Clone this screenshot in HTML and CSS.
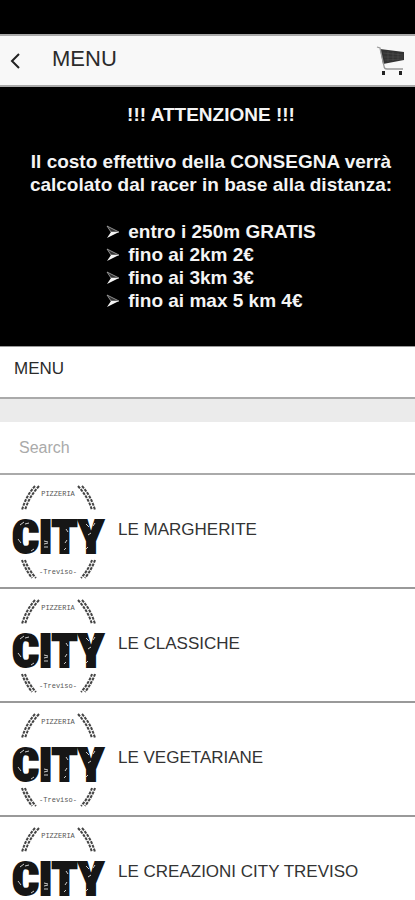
FILE: index.html
```html
<!DOCTYPE html>
<html lang="it">
<head>
    <meta charset="UTF-8">
    <meta name="viewport" content="width=device-width, initial-scale=1.0">
    <title>Menu</title>
    <link rel="stylesheet" href="styles.css">
</head>
<body>
    <!-- Shared artwork -->
    <svg class="sprite" aria-hidden="true">
        <symbol id="city-logo" viewBox="0 0 96 100">
            <g class="logo-arc">
                <path d="M23 5Q14 15 10 29M27 5Q17 16 13 29" />
                <path d="M70 5Q79 15 83 29M66 5Q76 16 80 29" />
                <path d="M10 79Q13 88 20 97M13 79Q16 88 24 97" />
                <path d="M83 79Q80 88 73 97M80 79Q77 88 69 97" />
            </g>
            <text class="logo-small" x="46" y="15">PIZZERIA</text>
            <text class="logo-name" x="46" y="72">CITY</text>
            <text class="logo-small" x="46" y="93">-Treviso-</text>
            <g class="logo-scratch">
                <path d="M8 44l4-3M13 43l4-1M6 58l3 4M19 70l3-2M32 60l4 1M32 63l4-1M32 66l4 0M54 48l2 3M53 62l2-3M52 69l2-2M74 43l3 3M76 54l3-2M83 42l-2 3M74 68l2-2" />
            </g>
        </symbol>
        <symbol id="arrow" viewBox="0 0 14 14">
            <path class="arrow-top" d="M1 1L13 7H5Z" />
            <path class="arrow-bottom" d="M1 13L13 7H5Z" />
        </symbol>
    </svg>

    <header class="topbar">
        <button type="button" class="icon-button" aria-label="Indietro">
            <svg class="back-icon" viewBox="0 0 12 18"><path d="M10 2L3 9L10 16" /></svg>
        </button>
        <h1 class="topbar-title">MENU</h1>
        <button type="button" class="icon-button" aria-label="Carrello">
            <svg class="cart-icon" viewBox="0 0 30 30">
                <path class="cart-basket" d="M4 3L28 6V14L7 18Z" />
                <path class="cart-mesh" d="M7 7L27 9M8 11L27 11M9 14L27 13M12 5V16M17 6V15M22 7V14" />
                <path class="cart-frame" d="M1 1L4 2L8 20Q8 23 11 23H27" />
                <path class="cart-wheels" d="M6 25h3v4h-3zM23 25h3v4h-3z" />
            </svg>
        </button>
    </header>

    <section class="notice">
        <h2 class="notice-title">!!! ATTENZIONE !!!</h2>
        <p>Il costo effettivo della CONSEGNA verrà<br>calcolato dal racer in base alla distanza:</p>
        <ul class="rates">
            <li><svg class="arrow"><use href="#arrow" /></svg>entro i 250m GRATIS</li>
            <li><svg class="arrow"><use href="#arrow" /></svg>fino ai 2km 2€</li>
            <li><svg class="arrow"><use href="#arrow" /></svg>fino ai 3km 3€</li>
            <li><svg class="arrow"><use href="#arrow" /></svg>fino ai max 5 km 4€</li>
        </ul>
    </section>

    <h2 class="section-title">MENU</h2>

    <form class="search">
        <input type="search" class="search-input" placeholder="Search" aria-label="Search">
    </form>

    <nav class="categories">
        <a class="category" href="#margherite">
            <svg class="logo"><use href="#city-logo" /></svg>
            <span>LE MARGHERITE</span>
        </a>
        <a class="category" href="#classiche">
            <svg class="logo"><use href="#city-logo" /></svg>
            <span>LE CLASSICHE</span>
        </a>
        <a class="category" href="#vegetariane">
            <svg class="logo"><use href="#city-logo" /></svg>
            <span>LE VEGETARIANE</span>
        </a>
        <a class="category" href="#creazioni">
            <svg class="logo"><use href="#city-logo" /></svg>
            <span>LE CREAZIONI CITY TREVISO</span>
        </a>
    </nav>
</body>
</html>
```
FILE: styles.css
```css
* {
    margin: 0;
    padding: 0;
    box-sizing: border-box;
}

body {
    display: flex;
    flex-direction: column;
    height: 100vh;
    padding-top: 34px; /* status bar */
    overflow: hidden;
    background: #000;
    color: #2b2b2b;
    font-family: "Liberation Sans", Arial, sans-serif;
    font-size: 17px;
}

.sprite {
    display: none;
}

/* Top bar */
.topbar {
    display: flex;
    flex-shrink: 0;
    align-items: center;
    height: 53px;
    padding: 0 9px;
    background: #f8f8f8;
    border-top: 2px solid #aaa;
    border-bottom: 2px solid #aaa;
}

.topbar-title {
    flex: 1;
    padding: 0 0 4px 31px;
    font-size: 22px;
    font-weight: normal;
    line-height: 24px;
}

.icon-button {
    display: flex;
    background: none;
    border: none;
    cursor: pointer;
}

.back-icon {
    width: 12px;
    height: 18px;
    fill: none;
    stroke: #222;
    stroke-width: 2;
}

.cart-icon {
    width: 30px;
    height: 30px;
}

.cart-basket {
    fill: #333;
}

.cart-mesh {
    fill: none;
    stroke: #555;
    stroke-width: 0.5;
}

.cart-frame {
    fill: none;
    stroke: #999;
    stroke-width: 1.3;
}

.cart-wheels {
    fill: #222;
}

/* Delivery notice */
.notice {
    flex-shrink: 0;
    padding: 16px 0 34px 7px;
    background: #000;
    color: #f4f4f4;
    font-size: 19px;
    font-weight: bold;
    line-height: 23px;
    text-align: center;
}

.notice-title {
    margin-bottom: 24px;
    font-size: 19px;
}

.rates {
    width: fit-content;
    margin: 24px auto 0;
    list-style: none;
    text-align: left;
}

.rates li {
    display: flex;
    align-items: center;
    gap: 8px;
}

.arrow {
    width: 14px;
    height: 14px;
}

.arrow-top {
    fill: #333;
    stroke: #aaa;
    stroke-width: 0.8;
}

.arrow-bottom {
    fill: #f4f4f4;
}

/* Menu */
.section-title {
    flex-shrink: 0;
    height: 53px;
    padding: 12px 14px;
    background: #fff;
    border-top: 1px solid #999;
    border-bottom: 2px solid #aaa;
    font-size: 17px;
    font-weight: normal;
    line-height: 20px;
}

.search {
    flex-shrink: 0;
    border-top: 23px solid #ebebeb;
    border-bottom: 2px solid #aaa;
    background: #fff;
}

.search-input {
    display: block;
    width: 100%;
    height: 51px;
    padding: 0 19px;
    border: none;
    background: none;
    font-family: inherit;
    font-size: 16px;
    outline: none;
    appearance: none;
}

.search-input::placeholder {
    color: #aaa;
}

.categories {
    flex: 1;
    overflow: hidden;
    background: #fff;
}

.category {
    display: flex;
    align-items: center;
    gap: 10px;
    height: 114px;
    padding: 0 12px;
    border-bottom: 2px solid #999;
    color: #333;
    text-decoration: none;
}

.category span {
    padding-bottom: 2px;
}

.logo {
    flex-shrink: 0;
    width: 96px;
    height: 100px;
}

.logo-arc {
    fill: none;
    stroke: #444;
    stroke-width: 2;
    stroke-dasharray: 3 1;
}

.logo-small {
    fill: #555;
    font-family: "Liberation Mono", monospace;
    font-size: 7px;
    text-anchor: middle;
}

.logo-name {
    fill: #161616;
    stroke: #161616;
    stroke-width: 2;
    font-family: "Roboto Condensed", "Open Sans Condensed", Roboto, sans-serif;
    font-size: 47px;
    font-weight: 900;
    text-anchor: middle;
}

.logo-scratch {
    fill: none;
    stroke: #ccc;
    stroke-width: 1;
}
```
